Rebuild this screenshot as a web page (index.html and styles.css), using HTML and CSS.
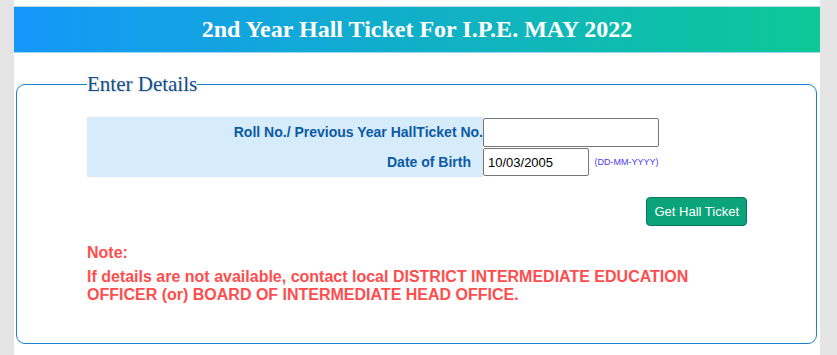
FILE: index.html
```html
<!DOCTYPE html>
<html lang="en">
<head>
    <meta charset="UTF-8">
    <meta name="viewport" content="width=device-width, initial-scale=1.0">
    <title>2nd Year Hall Ticket - I.P.E. MAY 2022</title>
    <link rel="stylesheet" href="styles.css">
</head>
<body>
    <div class="page">
        <div class="banner">2nd Year Hall Ticket For I.P.E. MAY 2022</div>

        <fieldset class="details">
            <legend>Enter Details</legend>

            <table class="form-table">
                <tr>
                    <td class="label label-tight">Roll No./ Previous Year HallTicket No.</td>
                    <td class="field"><input type="text" class="input-roll"></td>
                </tr>
                <tr>
                    <td class="label">Date of Birth</td>
                    <td class="field">
                        <input type="text" class="input-dob" value="10/03/2005">
                        <span class="hint">(DD-MM-YYYY)</span>
                    </td>
                </tr>
            </table>

            <div class="actions">
                <button class="ticket-btn">Get Hall Ticket</button>
            </div>

            <div class="note">
                <div class="note-title">Note:</div>
                <div class="note-text">If details are not available, contact local DISTRICT INTERMEDIATE EDUCATION OFFICER (or) BOARD OF INTERMEDIATE HEAD OFFICE.</div>
            </div>
        </fieldset>
    </div>
</body>
</html>
```

FILE: styles.css
```css
body {
    margin: 0;
    padding: 0;
    font-family: "Liberation Sans", Arial, sans-serif;
    background-color: #e5e5e5;
}

.page {
    width: 806px;
    margin-left: 14px;
    padding-top: 6px;
    min-height: 349px;
    background-color: #fff;
}

.banner {
    height: 45px;
    line-height: 45px;
    border-top: 1px solid #c4d9e6;
    border-bottom: 1px solid #9fd6ef;
    background: linear-gradient(90deg, #1597fa, #0cc897);
    color: #fff;
    text-align: center;
    font-family: "Liberation Serif", "Times New Roman", serif;
    font-weight: bold;
    font-size: 24px;
}

.details {
    margin: 19px 3px 0 2px;
    padding: 0 0 39px 0;
    border: 1px solid #1a80d0;
    border-radius: 9px;
}

.details legend {
    margin-left: 70px;
    padding: 0;
    font-family: "Liberation Serif", "Times New Roman", serif;
    font-size: 21px;
    color: #0f4f8c;
    text-shadow: 1px 1px 1px rgba(0, 0, 0, 0.15);
}

.form-table {
    margin: 20px 0 0 70px;
    border-collapse: collapse;
}

.form-table td {
    padding: 0;
    height: 30px;
}

.label {
    width: 384px;
    padding-right: 12px !important;
    background-color: #d6ecfb;
    text-align: right;
    color: #0b5aa5;
    font-size: 14px;
    font-weight: bold;
    white-space: nowrap;
}

.label-tight {
    padding-right: 0 !important;
    width: 396px;
}

.field {
    white-space: nowrap;
}

.field input {
    box-sizing: border-box;
    margin: 0;
    padding: 2px 4px;
    border: 1px solid #767676;
    border-radius: 2px;
    font-family: "Liberation Sans", Arial, sans-serif;
    font-size: 13px;
    color: #000;
    vertical-align: middle;
}

.input-roll {
    width: 176px;
    height: 29px;
}

.input-dob {
    width: 106px;
    height: 28px;
}

.hint {
    margin-left: 1px;
    font-size: 9px;
    color: #4a3cf0;
    vertical-align: middle;
}

.actions {
    margin: 20px 69px 0 0;
    text-align: right;
}

.ticket-btn {
    height: 29px;
    padding: 0 7px;
    background-color: #0aa37a;
    border: 1px solid #07775a;
    border-radius: 4px;
    color: #fff;
    font-family: "Liberation Sans", Arial, sans-serif;
    font-size: 13px;
    cursor: pointer;
}

.note {
    margin: 18px 0 0 70px;
    width: 640px;
    color: #ff4d4d;
    font-size: 16px;
    font-weight: bold;
    line-height: 18px;
}

.note-title {
    margin-bottom: 6px;
}
```
